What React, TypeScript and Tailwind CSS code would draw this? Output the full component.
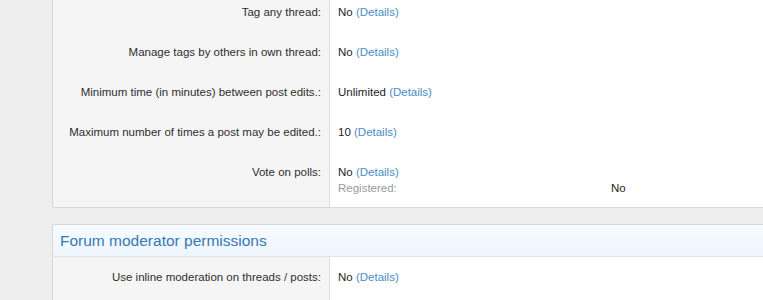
const FONT = { fontFamily: '"Liberation Sans", Arial, sans-serif' }

interface Row {
  label: string
  value: string
  details?: boolean
  extra?: { group: string; value: string }
}

const POST_ROWS: Row[] = [
  { label: "Tag any thread:", value: "No", details: true },
  { label: "Manage tags by others in own thread:", value: "No", details: true },
  { label: "Minimum time (in minutes) between post edits.:", value: "Unlimited", details: true },
  { label: "Maximum number of times a post may be edited.:", value: "10", details: true },
  {
    label: "Vote on polls:",
    value: "No",
    details: true,
    extra: { group: "Registered:", value: "No" },
  },
]

const MOD_ROWS: Row[] = [
  { label: "Use inline moderation on threads / posts:", value: "No", details: true },
]

function PermissionRow({ row }: { row: Row }) {
  return (
    <div className="flex flex-1 text-[11.5px] leading-[16px]">
      <div className="w-[277px] shrink-0 bg-[#f5f5f5] border-r border-[#dedede] pt-[12px] pb-[12px] pr-[8px] text-right text-[#2e2e2e]">
        {row.label}
      </div>
      <div className="flex-1 bg-white pt-[12px] pb-[12px] pl-[8px] text-[#1e1e1e]">
        <div>
          {row.value}{" "}
          {row.details && <a className="text-[#4a8cc5] cursor-pointer">(Details)</a>}
        </div>
        {row.extra && (
          <div className="grid grid-cols-[273px_1fr]">
            <span className="text-[#9a9a9a]">{row.extra.group}</span>
            <span className="text-[#1e1e1e]">{row.extra.value}</span>
          </div>
        )}
      </div>
    </div>
  )
}

export default function App() {
  return (
    <div className="w-[763px] h-[300px] overflow-hidden bg-[#eeeeee]" style={FONT}>
      <div className="pl-[52px]">
        <div className="w-[760px] -mt-[9px] border border-r-0 border-[#d8d8d8] rounded-bl-[3px] overflow-hidden [&>div:last-child>div]:pb-[11px]">
          {POST_ROWS.map((row) => (
            <PermissionRow key={row.label} row={row} />
          ))}
        </div>

        <div className="w-[760px] h-[80px] mt-[16px] flex flex-col border border-r-0 border-b-0 border-[#d8d8d8] rounded-tl-[3px] overflow-hidden">
          <h2 className="h-[32px] shrink-0 flex items-center px-[7px] text-[15.5px] font-normal text-[#3579b4] bg-gradient-to-b from-[#f7fbff] to-[#edf5fc] border-b border-[#dde6ee]">
            Forum moderator permissions
          </h2>
          {MOD_ROWS.map((row) => (
            <PermissionRow key={row.label} row={row} />
          ))}
        </div>
      </div>
    </div>
  )
}
